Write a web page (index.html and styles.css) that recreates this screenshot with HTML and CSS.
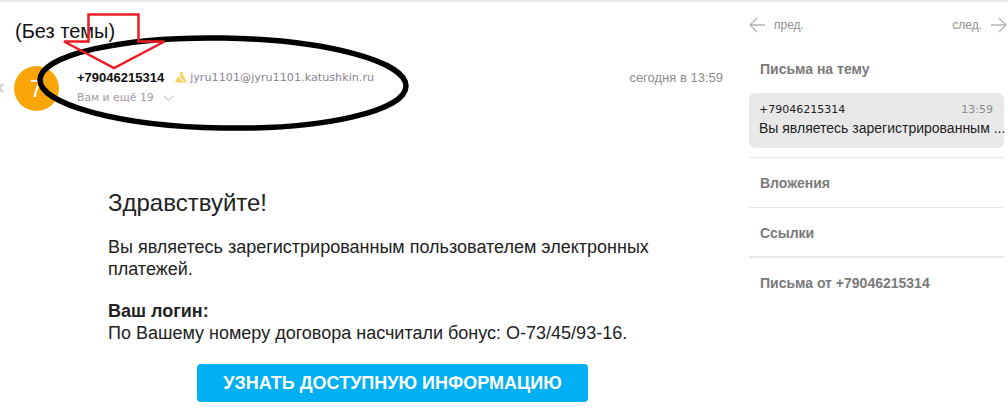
FILE: index.html
```html
<!DOCTYPE html>
<html lang="ru">
<head>
<meta charset="utf-8">
<title>Письмо</title>
<link rel="stylesheet" href="styles.css">
</head>
<body>
<div class="page">
  <main class="message">
    <h1 class="subject">(Без темы)</h1>
    <div class="header">
      <svg class="back" width="6" height="14" viewBox="0 0 6 14"><path d="M5 3 1 7l4 4" fill="none" stroke="#ccc" stroke-width="2"/></svg>
      <div class="avatar">7</div>
      <div class="meta">
        <div class="from">
          <span class="sender">+79046215314</span>
          <svg class="seal" width="14" height="14" viewBox="0 0 14 14"><path d="M1 12.5 3.500 7h2l.8-5h2.600l.6 3.500L13 12.500z" fill="#f8d25c"/><path d="M5 7.500l4.500 3.500M7 4.500h2" stroke="#fff" stroke-width="1.200" fill="none"/></svg>
          <span class="address">jyru1101@jyru1101.katushkin.ru</span>
        </div>
        <div class="recipients">
          <span>Вам и ещё 19</span>
          <svg width="11" height="6" viewBox="0 0 11 6"><path d="M.5.5l5 5 5-5" fill="none" stroke="#bbb"/></svg>
        </div>
      </div>
      <div class="date">сегодня в 13:59</div>
    </div>
    <article class="body">
      <h2 class="greeting">Здравствуйте!</h2>
      <p class="para">Вы являетесь зарегистрированным пользователем электронных платежей.</p>
      <p class="para login"><b>Ваш логин:</b><br>По Вашему номеру договора насчитали бонус: О-73/45/93-16.</p>
      <div class="cta"><a class="button">УЗНАТЬ ДОСТУПНУЮ ИНФОРМАЦИЮ</a></div>
    </article>
  </main>
  <aside class="side">
    <nav class="pager">
      <span class="pager-item">
        <svg width="16" height="16" viewBox="0 0 16 16"><path d="M8 1 1 8l7 7M1 8h15" fill="none" stroke="#b5b5b5" stroke-width="1.300"/></svg>
        <span>пред.</span>
      </span>
      <span class="pager-item">
        <span>след.</span>
        <svg width="16" height="16" viewBox="0 0 16 16"><path d="M8 1l7 7-7 7M15 8H0" fill="none" stroke="#b5b5b5" stroke-width="1.300"/></svg>
      </span>
    </nav>
    <section class="group first">
      <h3 class="group-title">Письма на тему</h3>
      <div class="thread">
        <div class="thread-top"><span>+79046215314</span><span class="thread-time">13:59</span></div>
        <div class="thread-text">Вы являетесь зарегистрированным ...</div>
      </div>
    </section>
    <section class="group"><h3 class="group-title">Вложения</h3></section>
    <section class="group thick"><h3 class="group-title">Ссылки</h3></section>
    <section class="group last"><h3 class="group-title">Письма от +79046215314</h3></section>
  </aside>
</div>
<svg class="markup" width="1008" height="416" viewBox="0 0 1008 416">
  <ellipse cx="223" cy="83" rx="183" ry="45" fill="none" stroke="#000" stroke-width="5.500" transform="rotate(1 223 83)"/>
  <path d="M88.500 14.500h50v27h26L114 68 64 41.500h24.500z" fill="none" stroke="#ed1c24" stroke-width="2.500"/>
</svg>
</body>
</html>
```
FILE: styles.css
```css
* { box-sizing: border-box; }
html, body { margin: 0; height: 100%; background: #fff; overflow: hidden; }
body { position: relative; font-family: "Liberation Sans", Arial, sans-serif; color: #222; }

.page {
  display: flex;
  height: 416px;
  border-top: 2px solid #e8e8e8;
}

.message { width: 749px; flex: none; padding-top: 17px; }
.subject { margin: 0 0 0 15px; font-size: 20px; font-weight: 400; line-height: 24px; color: #111; }

.header { display: flex; align-items: flex-start; height: 58px; margin-top: 23px; }
.back { margin-top: 15px; margin-left: -2px; flex: none; }
.avatar {
  width: 45px; height: 45px; border-radius: 50%; flex: none;
  margin-left: 10px;
  background: #f9a507; color: #fff;
  font-size: 24px; line-height: 45px; text-align: center;
}
.meta { margin-left: 18px; flex: 1; padding-top: 2px; }
.from { display: flex; align-items: center; height: 18px; }
.sender { font-size: 13px; font-weight: 700; color: #111; }
.seal { margin-left: 10px; margin-right: 2px; }
.address { font-family: "DejaVu Sans", sans-serif; font-size: 11.200px; color: #8a8494; white-space: nowrap; }
.recipients { display: flex; align-items: center; gap: 9px; margin-top: 5px; font-family: "DejaVu Sans", sans-serif; font-size: 10.800px; color: #a49aa8; }
.date { width: 100px; margin-right: 26px; margin-top: 4px; text-align: right; font-size: 13px; color: #8c8c8c; white-space: nowrap; }

.body { padding: 64px 0 0 108px; width: 670px; }
.greeting { margin: 0; font-size: 24px; line-height: 30px; font-weight: 400; color: #222; }
.para { margin: 18px 0 0; font-size: 18px; line-height: 22px; color: #222; width: 560px; }
.login { margin-top: 20px; }
.cta { display: flex; margin-top: 20px; padding-left: 89px; }
.button {
  display: block; flex: none; width: 391px; height: 38px; border-radius: 4px;
  background: #00b0f2; color: #fff; font-size: 18px; font-weight: 700; line-height: 38px; text-align: center; white-space: nowrap;
}

.side { width: 255px; flex: none; }
.pager { display: flex; justify-content: space-between; align-items: center; height: 16px; margin: 15px -3px 0 0; font-size: 12px; color: #909090; }
.pager-item { display: flex; align-items: center; gap: 9px; }

.group { border-bottom: 1px solid #e8e8e8; padding: 0 0 0 11px; height: 50px; }
.group-title { margin: 0; font-size: 14px; font-weight: 700; color: #7a7a7a; line-height: 16px; padding-top: 17px; }
.group.first { height: 105px; margin-top: 20px; padding: 0; }
.group.first .group-title { padding: 8px 0 0 11px; }
.group.thick { border-bottom-width: 2px; }
.group.last { border: 0; }

.thread { margin-top: 16px; height: 55px; background: #e8e8e8; border-radius: 6px; padding: 9px 11px 0 10px; }
.thread-top { display: flex; justify-content: space-between; font-family: "DejaVu Sans", sans-serif; font-size: 11px; line-height: 16px; color: #222; }
.thread-time { color: #8c8c8c; }
.thread-text { font-size: 14px; line-height: 21px; white-space: nowrap; color: #222; }

.markup { position: absolute; left: 0; top: 0; pointer-events: none; }
```
